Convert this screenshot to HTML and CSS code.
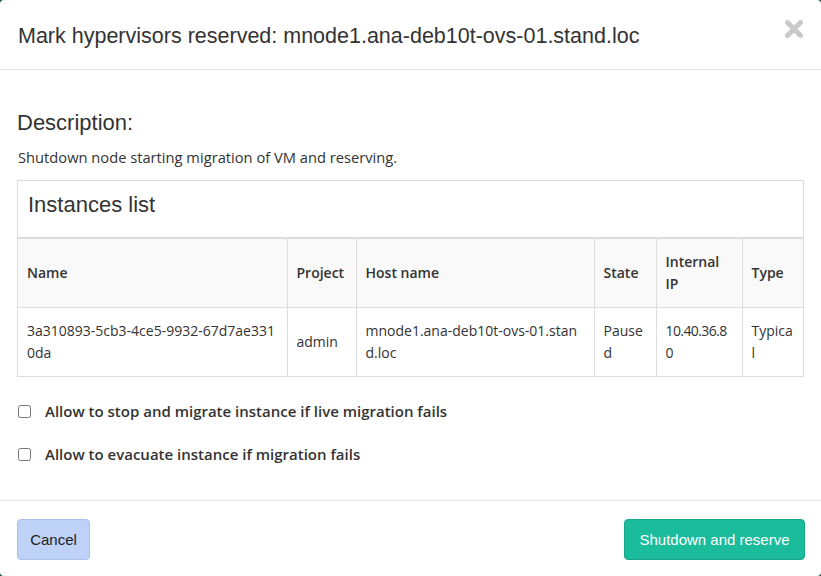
FILE: index.html
```html
<!DOCTYPE html>
<html lang="en">
<head>
    <meta charset="UTF-8">
    <meta name="viewport" content="width=device-width, initial-scale=1.0">
    <title>Mark hypervisors reserved</title>
    <link rel="stylesheet" href="styles.css">
</head>
<body>
    <div class="modal">
        <div class="modal-header">
            <h3 class="modal-title">Mark hypervisors reserved: mnode1.ana-deb10t-ovs-01.stand.loc</h3>
            <button class="close" aria-label="Close">
                <svg width="20" height="20" viewBox="0 0 20 20">
                    <path d="M3.5 3.5 L16.5 16.5 M16.5 3.5 L3.5 16.5" stroke="#c9c9c9" stroke-width="5" stroke-linecap="round"/>
                </svg>
            </button>
        </div>
        <div class="modal-body">
            <h4 class="section-title">Description:</h4>
            <p class="description">Shutdown node starting migration of VM and reserving.</p>
            <div class="panel">
                <div class="panel-heading">Instances list</div>
                <table class="table">
                    <colgroup>
                        <col style="width: 269px">
                        <col style="width: 69px">
                        <col style="width: 238px">
                        <col style="width: 62px">
                        <col style="width: 86px">
                        <col>
                    </colgroup>
                    <thead>
                        <tr>
                            <th>Name</th>
                            <th>Project</th>
                            <th>Host name</th>
                            <th>State</th>
                            <th>Internal IP</th>
                            <th>Type</th>
                        </tr>
                    </thead>
                    <tbody>
                        <tr>
                            <td>3a310893-5cb3-4ce5-9932-67d7ae3310da</td>
                            <td>admin</td>
                            <td>mnode1.ana-deb10t-ovs-01.stand.loc</td>
                            <td>Paused</td>
                            <td class="ip">10.40.36.80</td>
                            <td>Typical</td>
                        </tr>
                    </tbody>
                </table>
            </div>
            <label class="check"><input type="checkbox"> Allow to stop and migrate instance if live migration fails</label>
            <label class="check"><input type="checkbox"> Allow to evacuate instance if migration fails</label>
        </div>
        <div class="modal-footer">
            <button class="btn btn-cancel">Cancel</button>
            <button class="btn btn-primary">Shutdown and reserve</button>
        </div>
    </div>
</body>
</html>
```

FILE: styles.css
```css
html, body {
    margin: 0;
    height: 100%;
}
body {
    background-color: #174a45;
    font-family: "Open Sans", "Liberation Sans", sans-serif;
    font-size: 14px;
    color: #333;
}
.modal {
    background: #fff;
    border-radius: 4px;
    height: 576px;
    display: flex;
    flex-direction: column;
}
.modal-header {
    display: flex;
    justify-content: space-between;
    align-items: flex-start;
    padding: 19px 17px 16px 18px;
    border-bottom: 1px solid #e5e5e5;
}
.modal-title {
    margin: 0;
    font-family: "Liberation Sans", sans-serif;
    font-weight: normal;
    font-size: 21.5px;
    line-height: 34px;
}
.close {
    background: none;
    border: none;
    padding: 0;
    margin-top: 0;
    cursor: pointer;
}
.modal-body {
    padding: 40px 17px 0;
    flex: 1;
}
.section-title {
    margin: 0;
    font-family: "Liberation Sans", sans-serif;
    font-weight: normal;
    font-size: 22px;
    line-height: 26px;
}
.description {
    margin: 11px 0 13px 1px;
    font-size: 14.7px;
    line-height: 20px;
}
.panel {
    border: 1px solid #ddd;
    border-bottom: none;
}
.panel-heading {
    padding: 6px 10px 14px;
    font-family: "Liberation Sans", sans-serif;
    font-size: 22px;
    line-height: 36px;
    border-bottom: 2px solid #ddd;
}
.table {
    width: 100%;
    border-collapse: collapse;
    table-layout: fixed;
}
.table th,
.table td {
    padding: 12px 9px;
    line-height: 22px;
    text-align: left;
    vertical-align: middle;
    border: 1px solid #ddd;
    word-break: break-all;
}
.table td.ip {
    letter-spacing: -0.6px;
}
.table tr > :first-child {
    border-left: none;
}
.table tr > :last-child {
    border-right: none;
}
.table th {
    background-color: #f9f9f9;
    font-weight: 600;
    border-top: none;
    word-break: normal;
}
.check {
    display: flex;
    align-items: center;
    gap: 14px;
    font-size: 15px;
    font-weight: 600;
    line-height: 20px;
    margin-top: 24px;
}
.check + .check {
    margin-top: 23px;
}
.check input {
    margin: 0 0 0 1px;
    width: 13px;
    height: 13px;
}
.modal-footer {
    display: flex;
    justify-content: space-between;
    padding: 18px 16px 16px 17px;
    border-top: 1px solid #e5e5e5;
}
.btn {
    font-family: "Liberation Sans", sans-serif;
    font-size: 15px;
    height: 41px;
    padding: 0 10px;
    border-radius: 4px;
    border: 1px solid transparent;
    white-space: nowrap;
    cursor: pointer;
}
.btn-cancel {
    background-color: #bed1f6;
    border-color: #a9c1ef;
    color: #222;
    width: 73px;
}
.btn-primary {
    background-color: #1abc9c;
    border-color: #17a88b;
    color: #fff;
    width: 181px;
}
```
